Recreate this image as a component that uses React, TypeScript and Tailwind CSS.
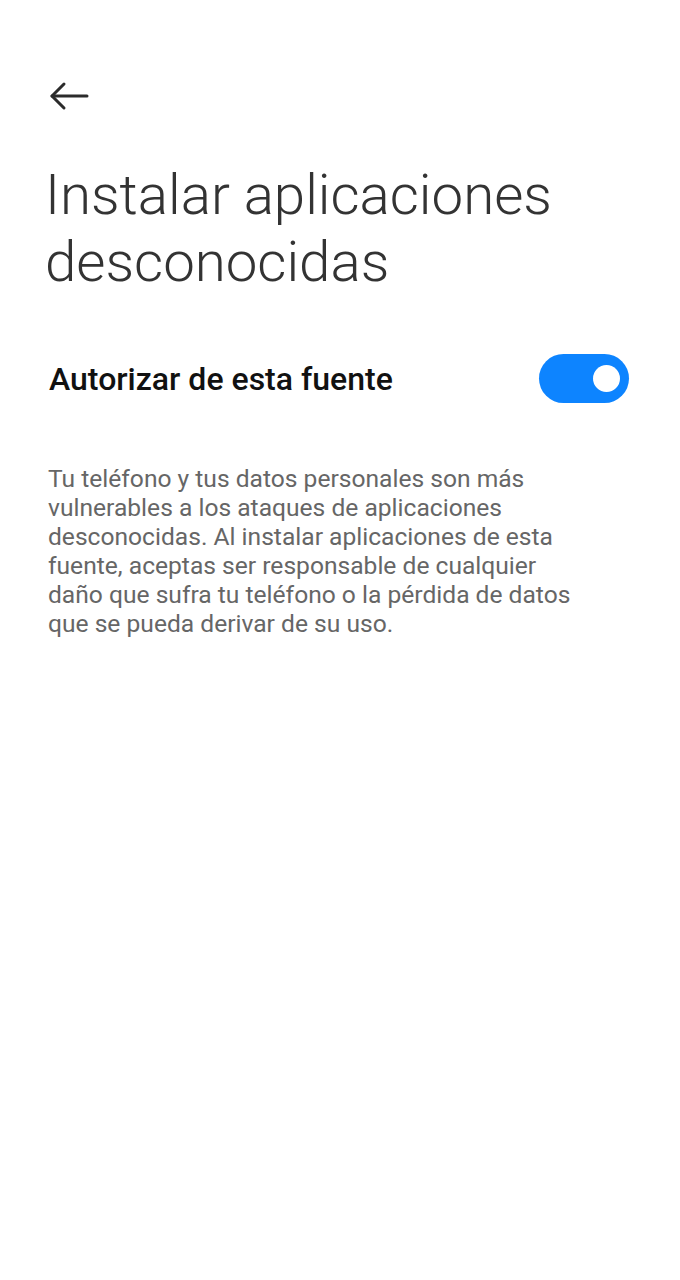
export default function App() {
  return (
    <div
      className="min-h-[1280px] w-[680px] bg-white"
      style={{ fontFamily: "Roboto, 'Noto Sans', sans-serif" }}
    >
      {/* Back arrow */}
      <div className="px-[49px] pt-[80px]">
        <svg width="40" height="32" viewBox="0 0 40 32" fill="none" stroke="#2b2b2b" strokeWidth="3" strokeLinecap="round" strokeLinejoin="round">
          <path d="M3 16h35" />
          <path d="M15 4 3 16l12 12" />
        </svg>
      </div>

      {/* Title */}
      <h1 className="mt-[50px] px-[45px] text-[56.4px] leading-[67px] font-light text-[#333333]">
        Instalar aplicaciones desconocidas
      </h1>

      {/* Toggle row */}
      <div className="mt-[58px] flex items-center justify-between pl-[49px] pr-[51px]">
        <span className="text-[32px] font-medium text-[#111111]">Autorizar de esta fuente</span>
        <div className="flex h-[49px] w-[90px] items-center justify-end rounded-full bg-[#0d84ff] pr-[9px]">
          <div className="h-[27px] w-[27px] rounded-full bg-white" />
        </div>
      </div>

      {/* Description */}
      <p className="mt-[61px] w-[584px] pl-[48px] text-[24.6px] leading-[29px] text-[#666666]">
        Tu teléfono y tus datos personales son más vulnerables a los ataques de aplicaciones desconocidas. Al instalar aplicaciones de esta fuente, aceptas ser responsable de cualquier daño que sufra tu teléfono o la pérdida de datos que se pueda derivar de su uso.
      </p>
    </div>
  );
}
